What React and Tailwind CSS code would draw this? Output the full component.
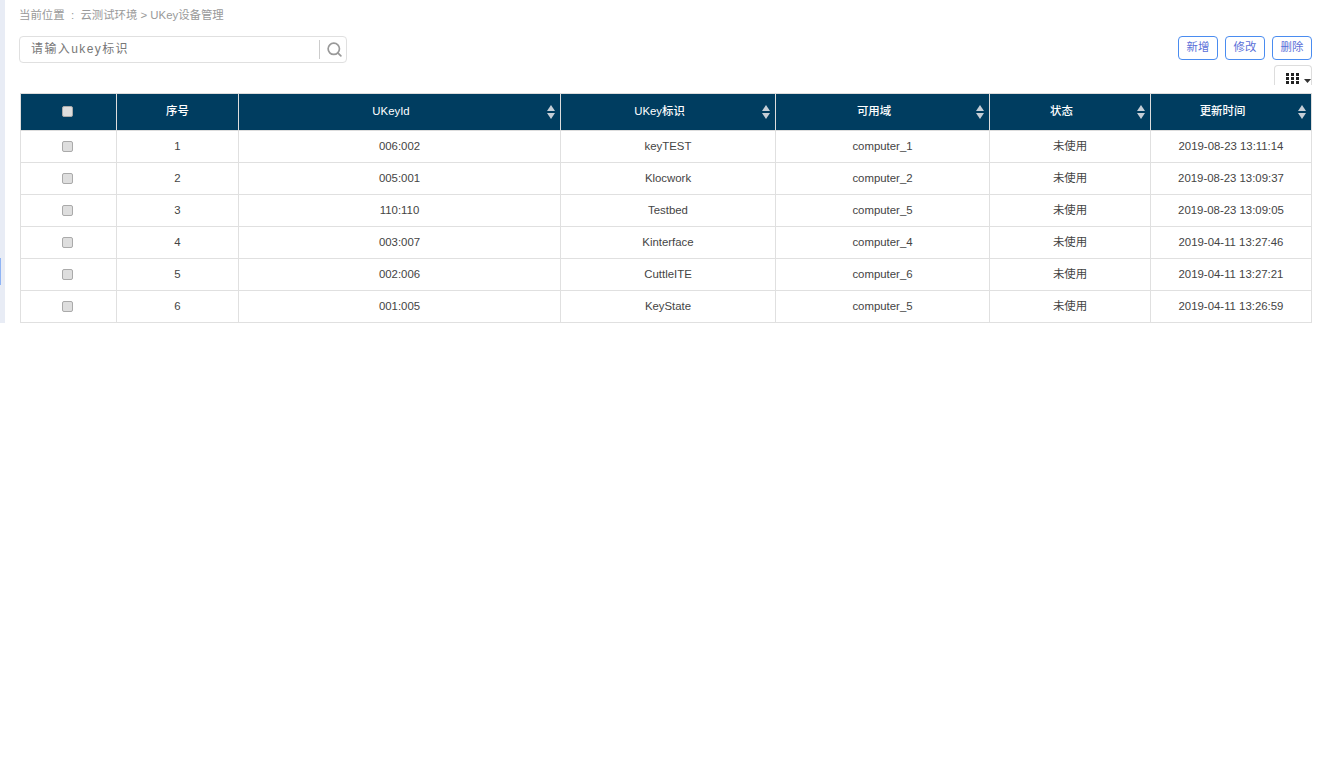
import { Search } from "lucide-react";

const rows = [
  ["1", "006:002", "keyTEST", "computer_1", "未使用", "2019-08-23 13:11:14"],
  ["2", "005:001", "Klocwork", "computer_2", "未使用", "2019-08-23 13:09:37"],
  ["3", "110:110", "Testbed", "computer_5", "未使用", "2019-08-23 13:09:05"],
  ["4", "003:007", "Kinterface", "computer_4", "未使用", "2019-04-11 13:27:46"],
  ["5", "002:006", "CuttleITE", "computer_6", "未使用", "2019-04-11 13:27:21"],
  ["6", "001:005", "KeyState", "computer_5", "未使用", "2019-04-11 13:26:59"],
];

const columns = [
  { title: "UKeyId", width: "w-[322px]" },
  { title: "UKey标识", width: "w-[215px]" },
  { title: "可用域", width: "w-[214px]" },
  { title: "状态", width: "w-[161px]" },
  { title: "更新时间", width: "w-[161px]" },
];

const Check = () => (
  <span className="inline-block w-[11px] h-[11px] rounded-[2px] border border-[#aaaaaa] bg-[#dedede] align-middle" />
);

const SortIcon = () => (
  <svg className="absolute right-[5px] top-[11px]" width="8" height="14" viewBox="0 0 8 14">
    <path d="M4 0L8 6H0Z" fill="#c5ced6" />
    <path d="M4 14L0 8H8Z" fill="#c5ced6" />
  </svg>
);

const ActionButton = ({ label }) => (
  <button className="w-[40px] h-[24px] rounded-[4px] border border-[#4a8cf0] bg-white text-[#5a6fd8]">{label}</button>
);

export default function App() {
  return (
    <div className="flex h-[780px] bg-white font-['Liberation_Sans','Noto_Sans_CJK_SC',sans-serif] text-[11.4px]">
      <div className="relative w-[5px] h-[323px] shrink-0 bg-[#e8ecf5]">
        <div className="absolute left-0 top-[258px] w-px h-[27px] bg-[#8fb4f5]" />
      </div>

      <div className="flex-1 min-w-0 pl-[14px] pr-[8px]">
        <div className="h-[30px] pt-[8px] leading-[14px] text-[#999999]">
          当前位置&nbsp; :&nbsp; 云测试环境 &gt; UKey设备管理
        </div>

        <div className="flex justify-between items-start pt-[6px]">
          <div className="flex items-center w-[328px] h-[27px] rounded-[4px] border border-[#e0e0e0] pl-[11px]">
            <span className="flex-1 tracking-[1.4px] text-[#777777] text-xs -mt-[2px]">请输入ukey标识</span>
            <span className="w-px h-[19px] bg-[#cccccc]" />
            <Search className="w-[17px] h-[17px] ml-[6px] mr-[3px] text-[#999999] -mt-px" strokeWidth={2.4} />
          </div>
          <div className="flex gap-[7px]">
            <ActionButton label="新增" />
            <ActionButton label="修改" />
            <ActionButton label="删除" />
          </div>
        </div>

        <div className="flex justify-end h-[30px] pt-[2px]">
          <div className="flex items-start gap-[5px] w-[38px] h-[20px] rounded-t-[4px] border border-b-0 border-[#dddddd] pt-[6px] pl-[11px]">
            <svg width="13" height="13" viewBox="0 0 13 13" fill="#222222" className="shrink-0">
              <rect x="0" y="1" width="3" height="3" />
              <rect x="5" y="1" width="3" height="3" />
              <rect x="10" y="1" width="3" height="3" />
              <rect x="0" y="5" width="3" height="3" />
              <rect x="5" y="5" width="3" height="3" />
              <rect x="10" y="5" width="3" height="3" />
              <rect x="0" y="9" width="3" height="3" />
              <rect x="5" y="9" width="3" height="3" />
              <rect x="10" y="9" width="3" height="3" />
            </svg>
            <svg width="7" height="4" viewBox="0 0 7 4" className="shrink-0 mt-[7px]">
              <path d="M0 0H7L3.5 4Z" fill="#333333" />
            </svg>
          </div>
        </div>

        <table className="table-fixed border-collapse w-[1291px] ml-[1px] text-center text-[#444444]">
          <thead>
            <tr className="h-[37px] bg-[#003d60] text-white">
              <th className="w-[96px] border border-[#dddddd] font-normal pr-[2px] pb-[2px]">
                <Check />
              </th>
              <th className="w-[122px] border border-[#dddddd] font-medium">序号</th>
              {columns.map((c) => (
                <th key={c.title} className={`relative border border-[#dddddd] font-medium pr-[17px] ${c.width}`}>
                  {c.title}
                  <SortIcon />
                </th>
              ))}
            </tr>
          </thead>
          <tbody>
            {rows.map((r) => (
              <tr key={r[0]} className="h-[32px]">
                <td className="border border-[#e0e0e0] pr-[2px]">
                  <Check />
                </td>
                {r.map((v, i) => (
                  <td key={i} className="border border-[#e0e0e0]">
                    {v}
                  </td>
                ))}
              </tr>
            ))}
          </tbody>
        </table>
      </div>
    </div>
  );
}
